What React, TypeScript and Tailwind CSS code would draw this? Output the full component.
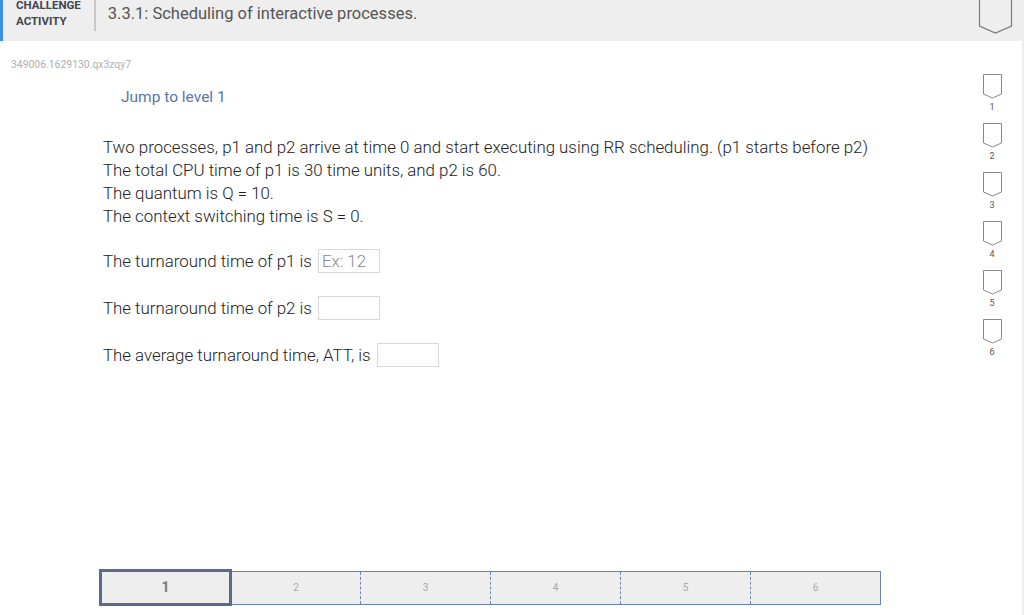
import React from 'react';

const font = { fontFamily: 'Roboto, "Liberation Sans", sans-serif' };

const Tag = ({ big = false }: { big?: boolean }) =>
  big ? (
    <svg width="35" height="35" viewBox="0 0 35 35" className="block">
      <path d="M1.5 -2 V26 L17.5 33 L33.5 26 V-2" fill="none" stroke="#7a7a7a" strokeWidth="1.2" />
    </svg>
  ) : (
    <svg width="21" height="27" viewBox="0 0 21 27" className="block">
      <path d="M1.5 1.5 H19.5 V21 L10.5 25 L1.5 21 Z" fill="#fff" stroke="#8a8a8a" strokeWidth="1" />
    </svg>
  );

const Blank = ({ w = 'w-[62px]', placeholder = '' }: { w?: string; placeholder?: string }) => (
  <span className={`${w} ml-[6px] inline-flex h-[24px] items-center border border-[#d6d9dc] px-[3px] text-[#8a8a8a]`}>
    {placeholder}
  </span>
);

const levels = [2, 3, 4, 5, 6];

export default function App() {
  return (
    <div className="flex h-[615px] w-[1024px] flex-col overflow-hidden bg-white" style={font}>
      {/* Header */}
      <div className="flex h-[41px] shrink-0 items-start bg-[#eeeeee]">
        <div className="h-full w-[3px] bg-[#3f8fdf]" />
        <div className="mt-[-3px] pl-[13px] text-[11.5px] font-bold leading-[16px] text-[#3e4651]">
          <div>CHALLENGE</div>
          <div>ACTIVITY</div>
        </div>
        <div className="ml-[13px] h-[31px] w-[2px] bg-[#c8c8c8]" />
        <div className="ml-[12px] mt-[3px] text-[16.5px] leading-[22px] text-[#555]">
          3.3.1: Scheduling of interactive processes.
        </div>
        <div className="ml-auto mr-[11px]">
          <Tag big />
        </div>
      </div>

      <div className="flex min-h-0 flex-1">
        {/* Main */}
        <div className="flex flex-1 flex-col">
          <div className="pl-[11px] pt-[17px] text-[10.4px] leading-[14px] text-[#b0b0b0]">349006.1629130.qx3zqy7</div>
          <div className="pl-[121px] pt-[15px] text-[15.5px] leading-[20px] text-[#5577a6]">Jump to level 1</div>

          <div className="pl-[103px] pt-[29px] text-[16.85px] font-light leading-[23px] text-[#222]">
            <div>Two processes, p1 and p2 arrive at time 0 and start executing using RR scheduling. (p1 starts before p2)</div>
            <div>The total CPU time of p1 is 30 time units, and p2 is 60.</div>
            <div>The quantum is Q = 10.</div>
            <div>The context switching time is S = 0.</div>

            <div className="mt-[21px] flex flex-col gap-[23px]">
              <div className="flex items-center">
                The turnaround time of p1 is
                <Blank placeholder="Ex: 12" />
              </div>
              <div className="flex items-center">
                The turnaround time of p2 is
                <Blank />
              </div>
              <div className="flex items-center">
                The average turnaround time, ATT, is
                <Blank />
              </div>
            </div>
          </div>

          {/* Level bar */}
          <div className="mt-auto flex items-center pb-[9px] pl-[99px]">
            <div className="flex h-[37px] w-[133px] items-center justify-center border-[3px] border-[#5a6a8a] bg-[#eeeeee] text-[14px] font-bold text-[#7a7a7a]">
              1
            </div>
            <div className="flex h-[34px] border-y border-r border-[#6a84ad] bg-[#eeeeee]">
              {levels.map((n, i) => (
                <div
                  key={n}
                  className={`flex items-center justify-center text-[10px] text-[#a8a8a8] ${i > 0 ? 'w-[130px] border-l border-dashed border-[#6a84ad]' : 'w-[128px]'}`}
                >
                  {n}
                </div>
              ))}
            </div>
          </div>
        </div>

        {/* Side progress */}
        <div className="flex w-[62px] flex-col items-center pt-[32px] pl-[2px]">
          {[1, 2, 3, 4, 5, 6].map((n) => (
            <div key={n} className="flex h-[49px] flex-col items-center">
              <Tag />
              <span className="mt-[2px] text-[9px] leading-[11px] text-[#555]">{n}</span>
            </div>
          ))}
        </div>
        <div className="w-[2px] bg-[#eeeeee]" />
      </div>
    </div>
  );
}
